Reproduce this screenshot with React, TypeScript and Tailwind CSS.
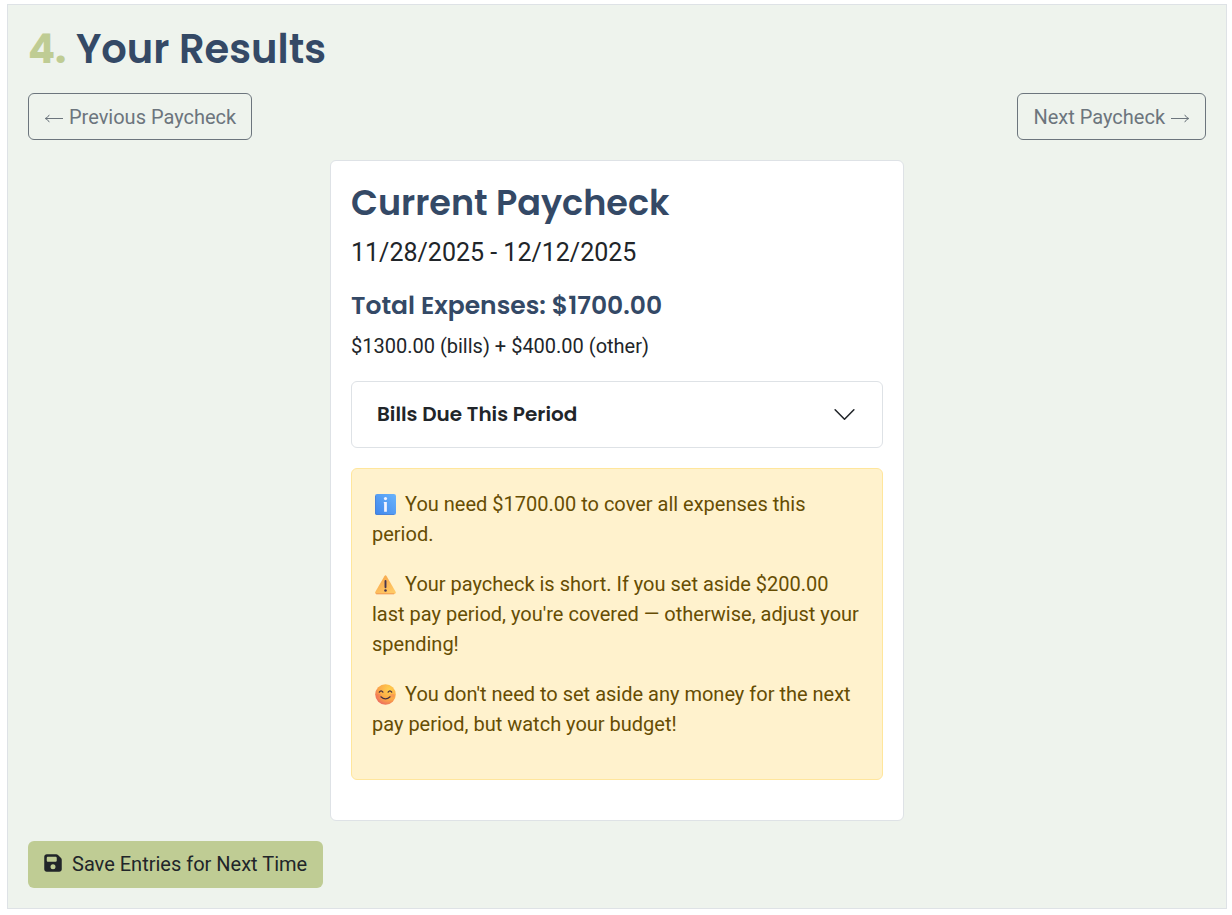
import { useState } from 'react';
import type { ReactNode } from 'react';
import { FaFloppyDisk } from 'react-icons/fa6';

const heading = "font-['Poppins',Inter,sans-serif] font-semibold";

function InfoEmoji() {
  return (
    <svg viewBox="0 0 20 20" className="size-[21px]" role="img" aria-label="Info">
      <defs>
        <linearGradient id="info-fill" x1="1" y1="0" x2="0" y2="1">
          <stop offset="0" stopColor="#6ab4fb" />
          <stop offset="1" stopColor="#3f86ec" />
        </linearGradient>
      </defs>
      <rect width="20" height="20" rx="2" fill="url(#info-fill)" />
      <path d="M0.4 2v16q0 1.6 1.6 1.6h16" fill="none" stroke="#4a7fd0" strokeWidth="0.8" />
      <circle cx="10" cy="4.4" r="1.5" fill="#f4f4ff" />
      <path d="M8.400 7.500h2.900v9.500H8.700V8.700h-.3z" fill="#f4f4ff" />
    </svg>
  );
}

function WarningEmoji() {
  return (
    <svg viewBox="0 0 20 20" className="size-[21px]" role="img" aria-label="Warning">
      <defs>
        <linearGradient id="warn-fill" x1="0" y1="0" x2="0.6" y2="1">
          <stop offset="0" stopColor="#f3a64c" />
          <stop offset="0.5" stopColor="#fbb455" />
          <stop offset="1" stopColor="#ffc965" />
        </linearGradient>
      </defs>
      <path d="M8.9 2.1q1.1-1.8 2.2 0l8.4 14.600q1 2.100-1.100 2.300H1.600Q-.5 18.800.5 16.700z" fill="url(#warn-fill)" />
      <path d="M0.6 18.300q.4.600 1.200.600h16.400" fill="none" stroke="#ee8f4e" strokeWidth="0.8" />
      <path d="M10 6.700v6" stroke="#46354f" strokeWidth="1.800" strokeLinecap="round" />
      <circle cx="10" cy="15.700" r="1.200" fill="#46354f" />
    </svg>
  );
}

function SmileEmoji() {
  return (
    <svg viewBox="0 0 20 20" className="size-[21px]" role="img" aria-label="Smiling face">
      <defs>
        <radialGradient id="smile-fill" cx="0.68" cy="0.25" r="0.85">
          <stop offset="0" stopColor="#ffcf4c" />
          <stop offset="0.6" stopColor="#fba747" />
          <stop offset="1" stopColor="#ea6162" />
        </radialGradient>
      </defs>
      <circle cx="10" cy="10" r="9.800" fill="url(#smile-fill)" />
      <ellipse cx="3.500" cy="11" rx="2.300" ry="1.800" fill="#f6695a" opacity="0.4" />
      <ellipse cx="16.500" cy="11" rx="2.300" ry="1.800" fill="#f6795a" opacity="0.4" />
      <g fill="none" stroke="#46303f" strokeWidth="1.200" strokeLinecap="round">
        <path d="M4.100 7.800q1.700-2.600 3.400 0" />
        <path d="M12.500 7.800q1.700-2.600 3.400 0" />
        <path d="M5.600 12.200q4.400 4 8.800 0" />
      </g>
    </svg>
  );
}

function Message({ icon, children }: { icon: ReactNode; children: ReactNode }) {
  return (
    <p className="mb-5">
      <span className="ml-[3px] mr-[9px] inline-flex align-[-4px]">{icon}</span>
      {children}
    </p>
  );
}

function Arrow({ direction }: { direction: 'left' | 'right' }) {
  return (
    <svg
      viewBox="0 0 20 20"
      className="inline size-5 align-[-4px]"
      fill="none"
      stroke="currentColor"
      aria-hidden="true"
    >
      {direction === 'left' ? (
        <path d="M19 10.500H1.500M5.300 6.800Q4 9.500 1.200 10.500Q4 11.500 5.300 14.200" />
      ) : (
        <path d="M1 10.500H18.500M14.700 6.800Q16 9.500 18.800 10.500Q16 11.500 14.700 14.200" />
      )}
    </svg>
  );
}

const outlineButton =
  'rounded-md border border-[#6c757d] px-[15px] pt-2 pb-1.5 leading-[31px] text-[#6c757d] hover:bg-[#6c757d] hover:text-white';

export default function App() {
  const [open, setOpen] = useState(false);

  return (
    <main className="bg-white pt-1 pr-[5px] pb-1.5 pl-[7px] font-[Roboto,'Liberation_Sans',sans-serif] text-xl leading-[30px] text-[#212529]">
      <section className="border border-[#dee2e6] bg-[#eef3ed] p-5">
        <h2 className={`${heading} mb-5 text-[40px] leading-[48px] text-[#344966]`}>
          <span className="font-bold text-[#bfcc94]">4.</span> Your Results
        </h2>

        <div className="mb-5 flex flex-wrap justify-between gap-3">
          <button type="button" className={outlineButton}>
            <Arrow direction="left" /> Previous Paycheck
          </button>
          <button type="button" className={outlineButton}>
            Next Paycheck <Arrow direction="right" />
          </button>
        </div>

        <article className="mx-auto mb-5 w-full max-w-[574px] rounded-md border border-[#dee2e6] bg-white p-5">
          <h3 className={`${heading} mb-2 text-[35px] leading-[44px] text-[#344966]`}>Current Paycheck</h3>
          <p className="mb-[18px] text-[25px] leading-[40px]">11/28/2025 - 12/12/2025</p>
          <h4 className={`${heading} mb-2.5 text-[25px] leading-[30px] text-[#344966]`}>
            Total Expenses: $1700.00
          </h4>
          <p className="mb-5">$1300.00 (bills) + $400.00 (other)</p>

          <div className="mb-5 rounded-md border border-[#dee2e6]">
            <button
              type="button"
              aria-expanded={open}
              onClick={() => setOpen(!open)}
              className={`${heading} flex w-full items-center justify-between px-[25px] py-5 leading-[25px]`}
            >
              Bills Due This Period
              <svg
                viewBox="0 0 16 16"
                className={open ? 'size-[25px] rotate-180' : 'size-[25px]'}
                fill="none"
                stroke="#212529"
                strokeLinecap="round"
                strokeLinejoin="round"
                aria-hidden="true"
              >
                <path d="m2 5 6 6 6-6" />
              </svg>
            </button>
            {open && <p className="px-[25px] pb-5">$1300.00</p>}
          </div>

          <div role="alert" className="mb-5 rounded-md border border-[#ffe69c] bg-[#fff2cd] p-5 text-[#664d03]">
            <Message icon={<InfoEmoji />}>You need $1700.00 to cover all expenses this period.</Message>
            <Message icon={<WarningEmoji />}>
              Your paycheck is short. If you set aside $200.00 last pay period, you're covered — otherwise, adjust
              your spending!
            </Message>
            <Message icon={<SmileEmoji />}>
              You don't need to set aside any money for the next pay period, but watch your budget!
            </Message>
          </div>
        </article>

        <button type="button" className="rounded-md bg-[#bfcc94] px-4 py-2 leading-[31px]">
          <FaFloppyDisk className="mr-2.5 inline w-[18px] align-[-2px]" aria-hidden="true" />
          Save Entries for Next Time
        </button>
      </section>
    </main>
  );
}
